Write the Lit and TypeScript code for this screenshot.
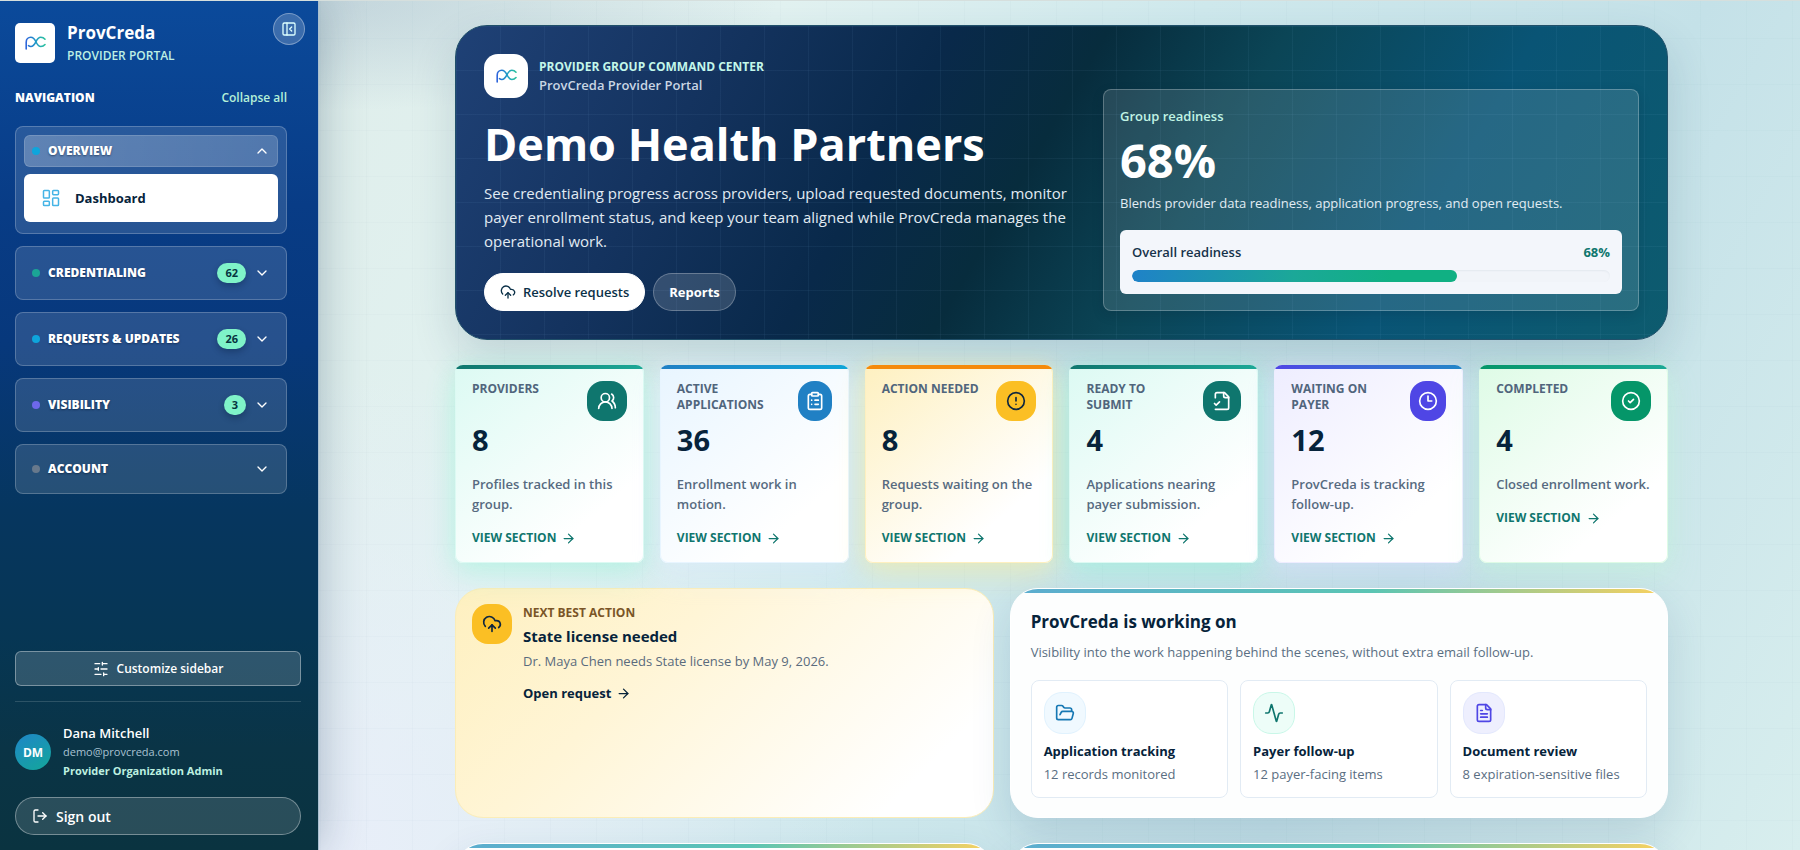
import { LitElement, html, css, svg, nothing } from "lit";
import { customElement, state } from "lit/decorators.js";
import { classMap } from "lit/directives/class-map.js";

const paths = {
  panel: svg`<rect x="3" y="3" width="18" height="18" rx="2"/><path d="M9 3v18"/><path d="m16 15-3-3 3-3"/>`,
  dashboard: svg`<rect x="3" y="3" width="7" height="9" rx="1"/><rect x="14" y="3" width="7" height="5" rx="1"/><rect x="14" y="12" width="7" height="9" rx="1"/><rect x="3" y="16" width="7" height="5" rx="1"/>`,
  up: svg`<path d="m18 15-6-6-6 6"/>`,
  down: svg`<path d="m6 9 6 6 6-6"/>`,
  sliders: svg`<path d="M21 4h-7M10 4H3M21 12h-9M8 12H3M21 20h-5M12 20H3M14 2v4M8 10v4M16 18v4"/>`,
  logout: svg`<path d="M9 21H5a2 2 0 0 1-2-2V5a2 2 0 0 1 2-2h4"/><path d="m16 17 5-5-5-5"/><path d="M21 12H9"/>`,
  upload: svg`<path d="M12 13v8"/><path d="M4 14.899A7 7 0 1 1 15.71 8h1.79a4.5 4.5 0 0 1 2.5 8.242"/><path d="m8 17 4-4 4 4"/>`,
  users: svg`<path d="M18 21a8 8 0 0 0-16 0"/><circle cx="10" cy="8" r="5"/><path d="M22 20c0-3.37-2-6.5-4-8a5 5 0 0 0-.45-8.3"/>`,
  clipboard: svg`<rect x="8" y="2" width="8" height="4" rx="1"/><path d="M16 4h2a2 2 0 0 1 2 2v14a2 2 0 0 1-2 2H6a2 2 0 0 1-2-2V6a2 2 0 0 1 2-2h2"/><path d="M12 11h4M12 16h4M8 11h.01M8 16h.01"/>`,
  alert: svg`<circle cx="12" cy="12" r="10"/><path d="M12 8v4M12 16h.01"/>`,
  fileCheck: svg`<path d="M4 22h14a2 2 0 0 0 2-2V7l-5-5H6a2 2 0 0 0-2 2v4"/><path d="M14 2v4a2 2 0 0 0 2 2h4"/><path d="m3 15 2 2 4-4"/>`,
  clock: svg`<circle cx="12" cy="12" r="10"/><path d="M12 6v6h4.5"/>`,
  check: svg`<circle cx="12" cy="12" r="10"/><path d="m9 12 2 2 4-4"/>`,
  arrow: svg`<path d="M5 12h14"/><path d="m12 5 7 7-7 7"/>`,
  folder: svg`<path d="m6 14 1.5-2.9A2 2 0 0 1 9.24 10H20a2 2 0 0 1 1.94 2.5l-1.54 6a2 2 0 0 1-1.95 1.5H4a2 2 0 0 1-2-2V5a2 2 0 0 1 2-2h3.9a2 2 0 0 1 1.69.9l.81 1.2a2 2 0 0 0 1.67.9H18a2 2 0 0 1 2 2v2"/>`,
  activity: svg`<path d="M22 12h-2.48a2 2 0 0 0-1.93 1.46l-2.35 8.36a.25.25 0 0 1-.48 0L9.24 2.18a.25.25 0 0 0-.48 0l-2.35 8.36A2 2 0 0 1 4.49 12H2"/>`,
  file: svg`<path d="M15 2H6a2 2 0 0 0-2 2v16a2 2 0 0 0 2 2h12a2 2 0 0 0 2-2V7Z"/><path d="M14 2v4a2 2 0 0 0 2 2h4"/><path d="M10 9H8M16 13H8M16 17H8"/>`,
};
type IconName = keyof typeof paths;

const icon = (name: IconName, size = 16, weight = 2) => html`<svg
  width=${size} height=${size} viewBox="0 0 24 24" fill="none" stroke="currentColor"
  stroke-width=${weight} stroke-linecap="round" stroke-linejoin="round" aria-hidden="true"
>${paths[name]}</svg>`;

const brandMark = () => html`<svg width="21" height="14" viewBox="0 0 21 14" fill="none" stroke-width="1.6" stroke-linecap="round" aria-hidden="true">
  <defs><linearGradient id="mark" x1="0" y1="0" x2="21" y2="0" gradientUnits="userSpaceOnUse">
    <stop offset="0" stop-color="#2f5fdd"/><stop offset=".5" stop-color="#1f97c8"/><stop offset="1" stop-color="#2fc79a"/>
  </linearGradient></defs>
  <path stroke="url(#mark)" d="M1.200 13V6.300C1.200 3.300 3.300 1.300 5.800 1.300S9.600 3 10.900 5.700S13.200 10.500 15.800 10.500C17.600 10.500 19 9.800 20 8.600"/>
  <path stroke="url(#mark)" d="M3.500 9.700C4.300 10.300 5 10.500 5.800 10.500C8.400 10.500 9.600 8.600 10.900 5.900S13.200 1.300 15.800 1.300C17.600 1.300 19 2 20 3.200"/>
</svg>`;

interface Group { name: string; dot: string; count?: number; items?: string[] }
const groups: Group[] = [
  { name: "Overview", dot: "sky", items: ["Dashboard"] },
  { name: "Credentialing", dot: "teal", count: 62 },
  { name: "Requests & Updates", dot: "sky", count: 26 },
  { name: "Visibility", dot: "violet", count: 3 },
  { name: "Account", dot: "slate" },
];

const stats: { label: string; value: number; text: string; icon: IconName; tone: string }[] = [
  { label: "Providers", value: 8, text: "Profiles tracked in this group.", icon: "users", tone: "t-teal" },
  { label: "Active applications", value: 36, text: "Enrollment work in motion.", icon: "clipboard", tone: "t-blue" },
  { label: "Action needed", value: 8, text: "Requests waiting on the group.", icon: "alert", tone: "t-amber" },
  { label: "Ready to submit", value: 4, text: "Applications nearing payer submission.", icon: "fileCheck", tone: "t-teal" },
  { label: "Waiting on payer", value: 12, text: "ProvCreda is tracking follow-up.", icon: "clock", tone: "t-violet" },
  { label: "Completed", value: 4, text: "Closed enrollment work.", icon: "check", tone: "t-green" },
];

const work: { title: string; text: string; icon: IconName; tone: string }[] = [
  { title: "Application tracking", text: "12 records monitored", icon: "folder", tone: "w-blue" },
  { title: "Payer follow-up", text: "12 payer-facing items", icon: "activity", tone: "w-teal" },
  { title: "Document review", text: "8 expiration-sensitive files", icon: "file", tone: "w-violet" },
];

const base = css`
  *, *::before, *::after { box-sizing: border-box; }
  h1, h2, h3, p, ul { margin: 0; padding: 0; }
  ul { list-style: none; }
  a { color: inherit; text-decoration: none; }
  button { font: inherit; color: inherit; border: 0; background: none; padding: 0; cursor: pointer; }
  svg { display: block; flex: none; }
`;

@customElement("portal-sidebar")
export class PortalSidebar extends LitElement {
  @state() private open = new Set(["Overview"]);

  static styles = [base, css`
    :host {
      display: flex; flex-direction: column; min-height: 0; position: relative; z-index: 1;
      padding: 22px 17px 15px 15px; color: #fff;
      border-right: 1px solid #a9bfd0;
      background: linear-gradient(180deg, #0b4a9b 0, #083c86 24%, #07387c 40%, #06365f 60%, #063654 75%, #0a3446 88%, #0a3340 100%);
      box-shadow: 0 0 44px rgba(15, 50, 80, 0.3);
    }
    .brand { display: flex; align-items: center; gap: 12px; height: 40px; }
    .mark { display: grid; place-items: center; width: 40px; height: 40px; border-radius: 5px; background: #fff; }
    .name { font-size: 17px; line-height: 26px; font-weight: 700; }
    .sub { font-size: 12px; line-height: 20px; font-weight: 600; color: #bdf0e4; text-transform: uppercase; }
    .toggle {
      position: absolute; top: 12px; right: 13px; width: 32px; height: 32px; border-radius: 50%;
      display: grid; place-items: center; background: rgba(255, 255, 255, 0.2); border: 1px solid rgba(255, 255, 255, 0.32); color: #dff;
    }
    nav { flex: 1; margin: 23px 14px 0 0; min-height: 0; }
    .nav-head { display: flex; justify-content: space-between; align-items: center; height: 24px; margin-bottom: 16px; }
    .nav-title { font-size: 12px; line-height: 16px; font-weight: 800; text-transform: uppercase; }
    .collapse { font-size: 12px; line-height: 16px; font-weight: 600; color: #b4f0d8; }
    .groups { display: flex; flex-direction: column; gap: 12px; }
    .group { padding: 8px; border: 1px solid rgba(255, 255, 255, 0.22); border-radius: 8px; background: rgba(255, 255, 255, 0.13); }
    .head {
      display: flex; align-items: center; gap: 8px; width: 100%; padding: 8px; border-radius: 6px;
      font-size: 12px; line-height: 16px; font-weight: 800; text-transform: uppercase; text-align: left;
      text-shadow: 0 1px 2px rgba(2, 20, 45, 0.5);
    }
    .opened .head { background: linear-gradient(100deg, rgba(255, 255, 255, 0.26), rgba(255, 255, 255, 0.19)); box-shadow: inset 0 0 0 1px rgba(255, 255, 255, 0.14); }
    .label { flex: 1; white-space: nowrap; }
    .dot { width: 8px; height: 8px; border-radius: 50%; }
    .sky { background: #0ea5dc; }
    .teal { background: #1ba596; }
    .violet { background: #6d68ea; }
    .slate { background: #68798c; }
    .count {
      min-width: 22px; height: 20px; padding: 0 8px; border-radius: 10px; display: grid; place-items: center;
      background: #7ff3c8; color: #06343f; font-size: 11px; font-weight: 700; text-shadow: none;
      box-shadow: 0 3px 6px rgba(2, 20, 45, 0.3);
    }
    .items { margin: 7px 0 3px; }
    .item {
      display: flex; align-items: center; gap: 14px; height: 48px; padding: 0 17px; border-radius: 6px;
      background: #fff; color: #06233b; font-size: 13px; font-weight: 700;
    }
    .item svg { color: #45b4e6; }
    .foot { display: flex; flex-direction: column; }
    .customize {
      display: flex; align-items: center; justify-content: center; gap: 8px; height: 35px; border-radius: 6px;
      background: rgba(255, 255, 255, 0.16); border: 1px solid rgba(255, 255, 255, 0.36); font-size: 12px; font-weight: 600;
    }
    .user { display: flex; align-items: center; gap: 12px; margin-top: 15px; padding: 21px 0 16px; border-top: 1px solid rgba(255, 255, 255, 0.15); }
    .avatar {
      display: grid; place-items: center; width: 36px; height: 36px; border-radius: 50%; font-size: 12px; font-weight: 700;
      background: linear-gradient(150deg, #1f86c8, #13a79a);
    }
    .user-name { font-size: 13px; line-height: 20px; font-weight: 600; }
    .mail { font-size: 11px; line-height: 18px; color: #a9c2d2; }
    .role { font-size: 11px; line-height: 20px; font-weight: 700; color: #bdf0e0; }
    .signout {
      display: flex; align-items: center; gap: 8px; height: 38px; padding: 0 16px; border-radius: 19px;
      background: rgba(255, 255, 255, 0.13); border: 1px solid rgba(255, 255, 255, 0.36); font-size: 14px; font-weight: 600;
    }
  `];

  private toggle(name: string) {
    const next = new Set(this.open);
    next.has(name) ? next.delete(name) : next.add(name);
    this.open = next;
  }

  render() {
    return html`
      <div class="brand">
        <span class="mark">${brandMark()}</span>
        <div><div class="name">ProvCreda</div><div class="sub">Provider portal</div></div>
      </div>
      <button class="toggle" aria-label="Hide sidebar">${icon("panel", 16)}</button>
      <nav aria-label="Navigation">
        <div class="nav-head">
          <span class="nav-title">Navigation</span>
          <button class="collapse" @click=${() => (this.open = new Set())}>Collapse all</button>
        </div>
        <div class="groups">
          ${groups.map((g) => {
            const opened = this.open.has(g.name) && !!g.items;
            return html`<section class=${classMap({ group: true, opened })}>
              <button class="head" aria-expanded=${opened} @click=${() => this.toggle(g.name)}>
                <span class="dot ${g.dot}"></span>
                <span class="label">${g.name}</span>
                ${g.count ? html`<span class="count">${g.count}</span>` : nothing}
                ${icon(opened ? "up" : "down", 16)}
              </button>
              ${opened
                ? html`<ul class="items">${g.items!.map((i) => html`<li><a class="item" href="#dashboard">${icon("dashboard", 20, 1.8)}${i}</a></li>`)}</ul>`
                : nothing}
            </section>`;
          })}
        </div>
      </nav>
      <div class="foot">
        <button class="customize">${icon("sliders", 16)}Customize sidebar</button>
        <div class="user">
          <span class="avatar">DM</span>
          <div>
            <div class="user-name">Dana Mitchell</div>
            <div class="mail">demo@provcreda.com</div>
            <div class="role">Provider Organization Admin</div>
          </div>
        </div>
        <button class="signout">${icon("logout", 16)}Sign out</button>
      </div>
    `;
  }
}

@customElement("app-root")
export class AppRoot extends LitElement {
  private readiness = 68;

  static styles = [base, css`
    :host {
      display: grid; grid-template-columns: 319px minmax(0, 1fr); grid-template-rows: minmax(0, 1fr); height: 100vh; overflow: hidden;
      box-sizing: border-box; border-top: 1px solid #d6dfdd; color: #06233b;
      font-family: "Open Sans", "Noto Sans", sans-serif; font-size: 14px;
    }
    main {
      overflow: hidden auto; scrollbar-width: none; padding: 24px 24px 24px 28px;
      background:
        linear-gradient(rgba(20, 90, 120, 0.02) 1px, transparent 1px) 0 -9px / 46px 46px,
        linear-gradient(90deg, rgba(20, 90, 120, 0.02) 1px, transparent 1px) 1px 0 / 46px 46px,
        radial-gradient(ellipse 460px 110px at 0 0, rgba(140, 165, 190, 0.34), transparent),
        radial-gradient(ellipse 560px 480px at 0 100%, #e8eef9, transparent),
        linear-gradient(118deg, #dfeeeb 0, #e2f2f1 24%, #cfe9ed 46%, #c4e1e8 72%, #d8eeee 100%);
    }
    .page { max-width: 1213px; margin: 0 auto; }
    .hero {
      display: grid; grid-template-columns: minmax(0, 1fr) minmax(0, 536px); gap: 32px; align-items: end;
      padding: 28px; border-radius: 32px; border: 1px solid #20506a; color: #fff;
      background:
        linear-gradient(rgba(150, 200, 240, 0.06) 1px, transparent 1px) 0 0 / 44px 44px,
        linear-gradient(90deg, rgba(150, 200, 240, 0.06) 1px, transparent 1px) 0 0 / 44px 44px,
        linear-gradient(120deg, #1f4176 0, #14335f 20%, #09294a 36%, #072c3d 47%, #0b4556 60%, #095475 78%, #0d5b6e 100%);
      box-shadow: 0 18px 44px rgba(20, 60, 90, 0.16);
    }
    .hero-brand { display: flex; align-items: center; gap: 11px; }
    .hero-mark { display: grid; place-items: center; width: 44px; height: 44px; border-radius: 14px; background: #fff; }
    .eyebrow { font-size: 12px; line-height: 18px; font-weight: 700; color: #c3f7ea; text-transform: uppercase; }
    .product { font-size: 13px; line-height: 18px; font-weight: 600; color: #c9d6e4; }
    h1 { margin-top: 18px; font-size: 45px; line-height: 56px; font-weight: 700; }
    .lead { margin-top: 9px; max-width: 600px; font-size: 15px; line-height: 24px; color: #e2ebf3; font-weight: 500; }
    .actions { display: flex; gap: 8px; margin-top: 20px; }
    .btn { display: flex; align-items: center; gap: 7px; height: 38px; padding: 0 15px; border-radius: 19px; font-size: 13px; font-weight: 600; border: 1px solid #fff; }
    .primary { background: #fff; color: #0b3148; }
    .ghost { background: rgba(255, 255, 255, 0.15); border-color: rgba(255, 255, 255, 0.26); font-weight: 700; }
    .ready { padding: 16px; border-radius: 8px; background: rgba(255, 255, 255, 0.12); border: 1px solid rgba(255, 255, 255, 0.25); box-shadow: 0 4px 12px rgba(0, 20, 40, 0.15); }
    .ready-label { font-size: 13px; line-height: 20px; font-weight: 600; color: #c0f3e4; }
    .ready-value { margin-top: 10px; font-size: 47px; line-height: 48px; font-weight: 700; }
    .ready-text { margin-top: 8px; font-size: 13px; line-height: 22px; font-weight: 500; color: #e2edf4; }
    .meter-box { margin-top: 16px; padding: 12px; border-radius: 6px; background: #f3f6fb; color: #16324a; }
    .meter-head { display: flex; justify-content: space-between; font-size: 13px; line-height: 20px; font-weight: 600; }
    .meter-value { color: #0f766e; font-weight: 700; }
    .meter { margin-top: 8px; height: 12px; border-radius: 6px; background: #f1f4f9; box-shadow: inset 0 1px 2px rgba(20, 50, 90, 0.06); overflow: hidden; }
    .fill { height: 100%; border-radius: 6px; background: linear-gradient(90deg, #1f82c8, #1ba898 50%, #10b083 80%); }

    .stats { display: grid; grid-template-columns: repeat(6, minmax(0, 1fr)); gap: 16px; margin-top: 25px; }
    .stat { --c1: #0f766e; --c2: #1ba896; --tint: #dcfaf3; --glow: rgba(120, 245, 205, 0.24); --ink: #fff;
      position: relative; min-height: 198px; padding: 16px 17px; border-radius: 8px; overflow: hidden;
      background: linear-gradient(140deg, var(--tint), #fff 75%); box-shadow: inset 0 0 0 1px var(--tint), 0 14px 30px var(--glow), 0 0 22px var(--glow); }
    .stat::before { content: ""; position: absolute; inset: 0 0 auto; height: 4px; background: linear-gradient(90deg, var(--c1), var(--c2)); }
    .t-blue { --c1: #2080c4; --c2: #0ea5d8; --tint: #e8f5ff; --glow: rgba(219, 234, 254, 0.3); }
    .t-amber { --c1: #f58a0b; --c2: #f58a0b; --tint: #fef0c0; --glow: rgba(254, 236, 140, 0.32); --badge: #fbbf24; --ink: #10273f; }
    .t-violet { --c1: #4f46e5; --c2: #2487c8; --tint: #eeedff; --glow: rgba(215, 220, 254, 0.3); }
    .t-green { --c1: #059669; --c2: #1ba896; --tint: #defbe6; --glow: rgba(187, 247, 208, 0.26); }
    .stat-head { display: flex; gap: 12px; justify-content: space-between; align-items: flex-start; }
    .stat-label { font-size: 12px; line-height: 16px; font-weight: 700; color: #50657c; text-transform: uppercase; }
    .badge { width: 40px; height: 40px; flex: 0 1 40px; border-radius: 16px; display: grid; place-items: center; background: var(--badge, var(--c1)); color: var(--ink); }
    .stat-value { margin-top: 1px; font-size: 29px; line-height: 36px; font-weight: 700; }
    .stat-text { margin-top: 16px; font-size: 13px; line-height: 20px; font-weight: 600; color: #566a80; }
    .view { display: inline-flex; align-items: center; gap: 5px; margin-top: 16px; font-size: 12px; line-height: 16px; font-weight: 700; color: #0f766e; text-transform: uppercase; }

    .row { display: grid; grid-template-columns: minmax(0, 9fr) minmax(0, 11fr); gap: 16px; margin-top: 25px; }
    .next {
      display: flex; align-items: flex-start; gap: 11px; padding: 15px 16px; border-radius: 28px; border: 1px solid #fbedb8;
      background: linear-gradient(135deg, #fef0c0, #fff5d6 35%, #fff 85%);
    }
    .next-icon { display: grid; place-items: center; width: 40px; height: 40px; border-radius: 16px; background: #fbbf24; color: #10273f; }
    .next-label { font-size: 12px; line-height: 18px; font-weight: 700; color: #7a5527; text-transform: uppercase; }
    .next h2 { font-size: 15px; line-height: 28px; font-weight: 700; }
    .next-text { font-size: 13px; line-height: 22px; color: #5a6b7d; }
    .open { display: inline-flex; align-items: center; gap: 5px; margin-top: 10px; font-size: 13px; line-height: 22px; font-weight: 700; }
    .panel { position: relative; overflow: hidden; padding: 19px 20px; border-radius: 28px; border: 1px solid #fff; background: #fdfefe; box-shadow: 0 16px 40px rgba(30, 70, 110, 0.14); }
    .panel::before { content: ""; position: absolute; inset: 0 0 auto; height: 4px; background: linear-gradient(90deg, #5cacd0, #5bc5b4 55%, #fad15e); }
    .panel h2 { font-size: 17px; line-height: 28px; font-weight: 700; }
    .panel-text { margin-top: 4px; font-size: 13px; line-height: 24px; color: #5a6e82; }
    .works { display: grid; grid-template-columns: repeat(3, minmax(0, 1fr)); gap: 12px; margin-top: 16px; }
    .work { padding: 11px 12px; border: 1px solid #e2ebf4; border-radius: 8px; background: #fff; }
    .work-icon { display: grid; place-items: center; width: 42px; height: 42px; border-radius: 18px; border: 1px solid; }
    .w-blue { color: #1678b4; background: #f0f9ff; border-color: #e0f2fe; }
    .w-teal { color: #0f766e; background: #edfdf8; border-color: #c9f7e8; }
    .w-violet { color: #4f46e5; background: #eeeffe; border-color: #e3e8fd; }
    .work h3 { margin-top: 6px; font-size: 13px; line-height: 22px; font-weight: 700; }
    .work p { font-size: 13px; line-height: 24px; color: #5a6e82; }
    .tall { min-height: 240px; }
  `];

  render() {
    return html`
      <portal-sidebar></portal-sidebar>
      <main>
        <div class="page">
          <section class="hero">
            <div>
              <div class="hero-brand">
                <span class="hero-mark">${brandMark()}</span>
                <div><div class="eyebrow">Provider group command center</div><div class="product">ProvCreda Provider Portal</div></div>
              </div>
              <h1>Demo Health Partners</h1>
              <p class="lead">See credentialing progress across providers, upload requested documents, monitor payer enrollment status, and keep your team aligned while ProvCreda manages the operational work.</p>
              <div class="actions">
                <button class="btn primary">${icon("upload", 16)}Resolve requests</button>
                <button class="btn ghost">Reports</button>
              </div>
            </div>
            <div class="ready">
              <div class="ready-label">Group readiness</div>
              <div class="ready-value">${this.readiness}%</div>
              <p class="ready-text">Blends provider data readiness, application progress, and open requests.</p>
              <div class="meter-box">
                <div class="meter-head"><span id="overall">Overall readiness</span><span class="meter-value">${this.readiness}%</span></div>
                <div class="meter" role="progressbar" aria-labelledby="overall" aria-valuenow=${this.readiness}>
                  <div class="fill" style="width: ${this.readiness}%"></div>
                </div>
              </div>
            </div>
          </section>

          <section class="stats">
            ${stats.map((s) => html`<article class="stat ${s.tone}">
              <div class="stat-head"><span class="stat-label">${s.label}</span><span class="badge">${icon(s.icon, 20)}</span></div>
              <div class="stat-value">${s.value}</div>
              <p class="stat-text">${s.text}</p>
              <a class="view" href="#section">View section ${icon("arrow", 15)}</a>
            </article>`)}
          </section>

          <section class="row">
            <article class="next">
              <span class="next-icon">${icon("upload", 20)}</span>
              <div>
                <div class="next-label">Next best action</div>
                <h2>State license needed</h2>
                <p class="next-text">Dr. Maya Chen needs State license by May 9, 2026.</p>
                <a class="open" href="#request">Open request ${icon("arrow", 15)}</a>
              </div>
            </article>
            <article class="panel">
              <h2>ProvCreda is working on</h2>
              <p class="panel-text">Visibility into the work happening behind the scenes, without extra email follow-up.</p>
              <div class="works">
                ${work.map((w) => html`<div class="work">
                  <span class="work-icon ${w.tone}">${icon(w.icon, 20)}</span>
                  <h3>${w.title}</h3>
                  <p>${w.text}</p>
                </div>`)}
              </div>
            </article>
          </section>

          <section class="row">
            <article class="panel tall"></article>
            <article class="panel tall"></article>
          </section>
        </div>
      </main>
    `;
  }
}
